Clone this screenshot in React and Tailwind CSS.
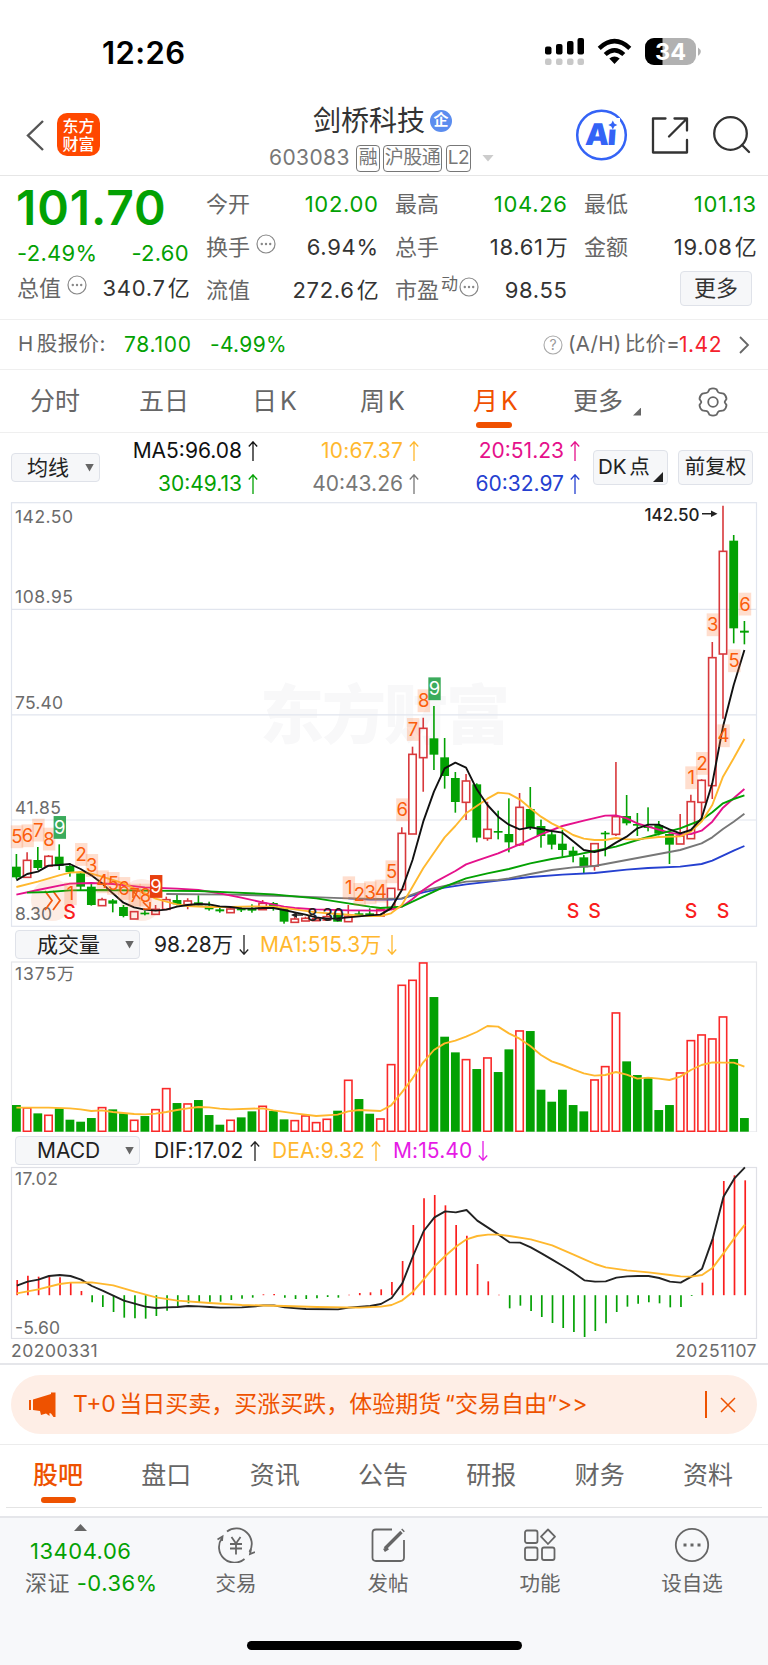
import { clsx } from 'clsx';

const RED = '#d8393c';
const GREEN = '#03a103';

const xAt = (i) => 16.4 + i * 10.706;

// [direction, high, body top, body bottom, low], in thirds of a pixel from the chart's top
const candles = [
  ['g', 1062, 1100, 1132, 1137], ['r', 1057, 1081, 1132, 1132], ['g', 1041, 1080, 1104, 1110],
  ['r', 1065, 1069, 1098, 1098], ['g', 1033, 1070, 1098, 1110], ['g', 1090, 1098, 1116, 1130],
  ['g', 1117, 1120, 1160, 1170], ['g', 1150, 1160, 1215, 1217], ['r', 1193, 1199, 1217, 1217],
  ['g', 1197, 1201, 1211, 1237], ['g', 1215, 1221, 1248, 1252], ['r', 1235, 1235, 1257, 1257],
  ['g', 1232, 1238, 1243, 1246], ['r', 1215, 1228, 1243, 1243], ['r', 1190, 1199, 1228, 1228],
  ['g', 1185, 1200, 1213, 1216], ['r', 1195, 1203, 1214, 1228], ['g', 1186, 1207, 1216, 1216],
  ['g', 1205, 1217, 1228, 1232], ['g', 1222, 1228, 1234, 1238], ['r', 1222, 1227, 1238, 1238],
  ['g', 1220, 1226, 1231, 1236], ['g', 1213, 1224, 1232, 1238], ['r', 1200, 1210, 1229, 1229],
  ['g', 1206, 1209, 1222, 1232], ['g', 1225, 1226, 1265, 1271], ['r', 1250, 1257, 1267, 1267],
  ['r', 1250, 1255, 1263, 1263], ['r', 1254, 1256, 1262, 1262], ['r', 1243, 1250, 1260, 1260],
  ['g', 1240, 1244, 1265, 1265], ['r', 1215, 1249, 1265, 1265], ['g', 1232, 1240, 1245, 1250],
  ['g', 1225, 1240, 1246, 1246], ['r', 1222, 1228, 1248, 1248], ['r', 1165, 1165, 1226, 1226],
  ['r', 982, 1000, 1169, 1169], ['r', 740, 763, 1002, 1002], ['r', 653, 685, 773, 875],
  ['g', 618, 715, 764, 810], ['g', 714, 772, 828, 866], ['g', 816, 834, 906, 938],
  ['r', 822, 843, 907, 960], ['g', 850, 853, 1013, 1027], ['r', 905, 988, 1015, 1022],
  ['g', 932, 993, 998, 1018], ['g', 895, 1002, 1027, 1057], ['r', 879, 922, 1034, 1038],
  ['g', 861, 927, 984, 990], ['g', 959, 978, 1008, 1043], ['g', 990, 1003, 1034, 1048],
  ['g', 990, 1031, 1050, 1070], ['g', 1040, 1052, 1065, 1087], ['g', 1065, 1072, 1102, 1119],
  ['r', 1031, 1031, 1098, 1112], ['g', 993, 998, 1003, 1069], ['r', 786, 950, 1003, 1008],
  ['g', 885, 948, 970, 976], ['g', 939, 972, 977, 1008], ['g', 922, 979, 984, 994],
  ['g', 963, 975, 1001, 1006], ['g', 1000, 1002, 1034, 1092], ['r', 942, 1008, 1032, 1032],
  ['r', 884, 905, 1016, 1016], ['r', 838, 841, 907, 960], ['r', 426, 473, 857, 897],
  ['r', 17, 154, 462, 656], ['g', 105, 122, 385, 430], ['g', 363, 392, 398, 433],
];

const averages = [
  {
    color: '#2540d0',
    points: [[31, 1195], [33, 1199], [35, 1199], [36, 1196], [38, 1177], [40, 1163], [42, 1153], [45, 1142], [48, 1131], [51, 1124], [54, 1119], [57, 1109], [59, 1104], [62, 1100], [64, 1092], [65, 1082], [66, 1067], [67, 1052], [68, 1038]],
  },
  {
    color: '#777777',
    points: [[14, 1182], [20, 1184], [25, 1188], [29, 1193], [31, 1195], [34, 1197], [36, 1195], [38, 1172], [40, 1158], [42, 1145], [45, 1140], [46, 1135], [48, 1122], [50, 1110], [52, 1102], [54, 1098], [57, 1080], [60, 1062], [62, 1050], [64, 1030], [65, 1012], [66, 987], [67, 965], [68, 941]],
  },
  {
    color: '#e5118b',
    points: [[0, 1184], [2, 1170], [4, 1157], [5, 1151], [7, 1149], [9, 1152], [12, 1162], [15, 1166], [17, 1170], [19, 1180], [21, 1193], [23, 1207], [25, 1220], [26, 1224], [28, 1228], [31, 1231], [34, 1232], [35, 1229], [36, 1220], [37, 1197], [38, 1170], [39, 1148], [41, 1113], [42, 1093], [43, 1082], [45, 1060], [47, 1033], [49, 1003], [51, 978], [53, 962], [55, 947], [56, 946], [57, 955], [58, 970], [59, 980], [61, 998], [62, 1003], [63, 1002], [64, 992], [65, 965], [66, 923], [67, 895], [68, 867]],
  },
  {
    color: GREEN,
    points: [[1, 1178], [3, 1176], [5, 1171], [8, 1170], [12, 1172], [17, 1173], [20, 1177], [24, 1183], [28, 1195], [31, 1210], [33, 1220], [34, 1224], [36, 1220], [38, 1190], [40, 1160], [42, 1135], [44, 1120], [46, 1107], [48, 1090], [50, 1077], [52, 1066], [54, 1053], [56, 1040], [58, 1020], [60, 1002], [62, 985], [64, 960], [65, 937], [66, 910], [67, 897], [68, 886]],
  },
  {
    color: '#ffb82e',
    points: [[0, 1161], [2, 1145], [4, 1126], [5, 1118], [6, 1116], [7, 1121], [8, 1130], [9, 1140], [10, 1150], [12, 1180], [13, 1196], [14, 1205], [15, 1213], [16, 1218], [18, 1221], [20, 1221], [22, 1219], [24, 1220], [26, 1228], [28, 1237], [30, 1242], [32, 1246], [33, 1248], [34, 1248], [35, 1240], [36, 1215], [37, 1160], [38, 1105], [39, 1058], [40, 1012], [41, 978], [42, 940], [43, 918], [44, 896], [45, 878], [46, 881], [47, 898], [48, 925], [49, 950], [50, 970], [51, 986], [52, 1005], [53, 1016], [54, 1020], [55, 1020], [56, 1014], [57, 1018], [58, 1018], [60, 1011], [62, 1009], [63, 995], [64, 965], [65, 915], [66, 830], [67, 775], [68, 717]],
  },
  {
    color: '#111111',
    points: [[0, 1141], [1, 1122], [2, 1115], [3, 1097], [4, 1095], [5, 1092], [6, 1107], [7, 1126], [8, 1150], [9, 1180], [10, 1208], [11, 1222], [12, 1229], [13, 1232], [14, 1229], [15, 1220], [16, 1215], [17, 1212], [18, 1213], [19, 1219], [20, 1221], [21, 1225], [22, 1226], [23, 1224], [24, 1224], [25, 1230], [26, 1237], [27, 1244], [28, 1252], [29, 1256], [30, 1255], [31, 1252], [32, 1249], [33, 1246], [34, 1244], [35, 1225], [36, 1170], [37, 1080], [38, 965], [39, 875], [40, 805], [41, 788], [42, 803], [43, 868], [44, 915], [45, 950], [46, 974], [47, 988], [48, 982], [49, 987], [50, 993], [51, 998], [52, 1024], [53, 1050], [54, 1056], [55, 1048], [56, 1028], [57, 1010], [58, 985], [59, 974], [60, 974], [61, 988], [62, 1000], [63, 990], [64, 955], [65, 850], [66, 680], [67, 555], [68, 450]],
  },
];

// [index, centre, digit, filled background]
const counts = [
  [0, 1010, '5'], [1, 1007, '6'], [2, 990, '7'], [3, 1017, '8'], [4, 982, '9', '#3bab5c'],
  [5, 1181, '1'], [6, 1063, '2'], [7, 1096, '3'], [8, 1145, '4'], [9, 1150, '5'], [10, 1165, '6'],
  [11, 1185, '7'], [12, 1185, '8'], [13, 1159, '9', '#e8400f'],
  [31, 1163, '1'], [32, 1183, '2'], [33, 1178, '3'], [34, 1173, '4'], [35, 1115, '5'],
  [36, 929, '6'], [37, 688, '7'], [38, 602, '8'], [39, 566, '9', '#3bab5c'],
  [63, 833, '1'], [64, 790, '2'], [65, 374, '3'], [66, 707, '4'], [67, 482, '5'], [68, 312, '6'],
];

const volumes = 'g526 r533 g551 r555 g536 g570 g576 g565 r532 g539 g551 r570 g559 r538 r475 g520 r521 g511 g556 g585 r570 g563 g545 r528 g544 g569 r571 r557 r577 r567 g543 r450 g508 g552 r566 r403 r165 r150 r98 g202 g321 g368 r388 g418 r383 g427 g359 r302 g304 g480 g516 g480 g526 g545 r449 r409 r248 g395 g436 g444 g541 g526 r428 r331 r314 r326 r260 g388 g565'
  .split(' ')
  .map((v) => [v[0], Number(v.slice(1))]);

const volumeAverage = [[0, 533], [3, 533], [5, 535], [6, 538], [7, 543], [8, 541], [9, 546], [11, 552], [12, 553], [13, 551], [14, 546], [15, 540], [16, 535], [17, 531], [18, 532], [19, 536], [20, 538], [23, 535], [24, 541], [26, 550], [28, 558], [30, 554], [31, 544], [32, 540], [34, 543], [35, 526], [36, 487], [37, 445], [38, 397], [39, 360], [40, 340], [41, 332], [42, 320], [43, 306], [44, 288], [45, 290], [46, 310], [47, 326], [48, 348], [49, 375], [50, 394], [51, 405], [52, 418], [53, 430], [54, 437], [55, 435], [56, 426], [57, 434], [58, 446], [59, 443], [60, 446], [61, 450], [62, 440], [63, 420], [64, 405], [65, 397], [66, 398], [67, 398], [68, 410]];

const macd = [450, 437, 440, 436, 442, 458, 483, 517, 531, 546, 563, 565, 566, 558, 542, 529, 520, 517, 515, 515, 510, 506, 503, 493, 492, 503, 507, 507, 505, 501, 503, 494, 489, 487, 478, 456, 393, 285, 205, 195, 226, 285, 317, 402, 454, 494, 535, 527, 543, 561, 579, 594, 606, 621, 603, 580, 546, 530, 521, 517, 520, 532, 531, 498, 458, 325, 153, 136, 151];

const dif = [[0, 467], [1, 455], [2, 449], [3, 438], [4, 435], [5, 438], [6, 449], [7, 468], [8, 482], [9, 497], [10, 512], [11, 521], [12, 530], [13, 534], [14, 532], [15, 531], [16, 528], [17, 529], [18, 531], [19, 533], [21, 532], [22, 530], [23, 526], [24, 526], [25, 532], [27, 537], [30, 538], [31, 533], [33, 528], [34, 522], [35, 504], [36, 460], [37, 378], [38, 303], [39, 262], [40, 244], [41, 247], [42, 240], [43, 272], [44, 293], [45, 314], [46, 337], [47, 338], [48, 352], [49, 370], [50, 389], [51, 408], [52, 428], [53, 451], [54, 455], [55, 454], [56, 443], [57, 439], [58, 438], [59, 438], [60, 444], [61, 455], [62, 458], [63, 440], [64, 416], [65, 325], [66, 200], [67, 146], [68, 112]];

const dea = [[0, 490], [2, 478], [4, 462], [5, 458], [7, 457], [9, 466], [11, 485], [13, 502], [15, 512], [18, 519], [21, 525], [25, 528], [28, 531], [32, 533], [34, 530], [35, 525], [36, 511], [37, 485], [38, 448], [39, 410], [40, 378], [41, 350], [42, 328], [43, 318], [44, 314], [45, 314], [46, 318], [48, 328], [50, 346], [52, 374], [53, 388], [54, 402], [55, 412], [57, 421], [59, 427], [61, 435], [62, 439], [63, 440], [64, 435], [65, 413], [66, 370], [67, 325], [68, 284]];

const toPoints = (list, dx = 0) => list.map(([i, y]) => `${xAt(i) + dx},${y / 3}`).join(' ');

const Line = ({ points, color, dx }) => (
  <polyline points={toPoints(points, dx)} fill="none" stroke={color} strokeWidth="1.9" strokeLinejoin="round" />
);

const AxisLabel = ({ y, children, length }) => (
  <text x="15" y={y} fontSize="17.5" fill="#6b6b6b" textLength={length}>{children}</text>
);

const PriceChart = () => (
  <svg className="block" width="768" height="426" viewBox="0 2 768 426">
    <text x="260" y="238" fontSize="64" fontWeight="900" fill="#f8f8f9" textLength="250">东方财富</text>
    <g stroke="#e1e5ee" strokeWidth="1.2" fill="none">
      <path d="M11.5 109.3H756.5M11.5 214.8H756.5M11.5 320H756.5" />
      <rect x="11.5" y="2.7" width="745" height="423.6" />
    </g>
    <AxisLabel y="22.5" length="58">142.50</AxisLabel>
    <AxisLabel y="103" length="58">108.95</AxisLabel>
    <AxisLabel y="209" length="48">75.40</AxisLabel>
    <AxisLabel y="314" length="46">41.85</AxisLabel>
    <circle cx="52" cy="400" r="21" fill="#fdece4" />
    <circle cx="141.5" cy="400" r="21" fill="#fdece4" />
    <AxisLabel y="420" length="37">8.30</AxisLabel>
    <path d="M45 391L52 400.5L45 410M53 391L60 400.5L53 410" fill="none" stroke="#f45a10" strokeWidth="1.8" />
    {candles.map(([dir, high, top, bottom, low], i) => {
      const x = xAt(i);
      if (dir === 'g') {
        return (
          <g key={i} fill={GREEN}>
            <rect x={x - 0.8} y={high / 3} width="1.6" height={(low - high) / 3} />
            <rect x={x - 4.4} y={top / 3} width="8.8" height={(bottom - top) / 3} />
          </g>
        );
      }
      return (
        <g key={i} stroke={RED} strokeWidth="1.6" fill="none">
          <path d={`M${x} ${high / 3}V${top / 3}M${x} ${bottom / 3}V${low / 3}`} />
          <rect x={x - 3.7} y={top / 3} width="7.4" height={(bottom - top) / 3} />
        </g>
      );
    })}
    {averages.map((line) => <Line key={line.color} {...line} />)}
    {counts.map(([i, y, digit, fill]) => (
      <g key={i}>
        <rect x={xAt(i) - 5.6} y={y / 3 - 11.3} width="12.4" height="22.8" fill={fill || '#ff7a3c'} opacity={fill ? 1 : 0.25} />
        <text x={xAt(i) + 0.5} y={y / 3 + 6.6} fontSize="18.5" textAnchor="middle" fill={fill ? '#fff' : '#fb5d0b'}>{digit}</text>
      </g>
    ))}
    <path d="M140 399L133 391M133 398V391H140M143 402L150 409M150 402V409H143" fill="none" stroke="#f45a10" strokeWidth="1.6" />
    {[[69.5, 418.5], [573, 418], [594.6, 418], [691, 418], [723, 418]].map(([x, y]) => (
      <text key={x} x={x} y={y} fontSize="19.5" fontWeight="500" textAnchor="middle" fill="#fa1e1e">S</text>
    ))}
    <g fill="#222" fontSize="17" fontWeight="500">
      <text x="644.5" y="20.5" textLength="55">142.50</text>
      <text x="307" y="421" textLength="37">8.30</text>
    </g>
    <path d="M702 13.7H712M303 415H293" stroke="#222" strokeWidth="1.4" />
    <path d="M711 10.5L717.5 13.7L711 17ZM297 412L291 415L297 418Z" fill="#222" />
  </svg>
);

const VolumeChart = () => (
  <svg className="block" width="768" height="171" viewBox="0 31 768 171">
    <rect x="11.5" y="32" width="745" height="170" fill="none" stroke="#e5e6ea" strokeWidth="1.2" />
    <AxisLabel y="50" length="59.5">1375万</AxisLabel>
    {volumes.map(([dir, top], i) =>
      dir === 'g' ? (
        <rect key={i} x={xAt(i) - 4.4} y={top / 3 - 0.3} width="8.8" height={202 - top / 3} fill={GREEN} />
      ) : (
        <rect key={i} x={xAt(i) - 3.7} y={top / 3 + 0.3} width="7.4" height={201 - top / 3} fill="none" stroke="#fa2a2a" strokeWidth="1.6" />
      )
    )}
    <Line points={volumeAverage} color="#ffb82e" />
  </svg>
);

const MacdChart = () => (
  <svg className="block" width="768" height="173" viewBox="0 36 768 173">
    <rect x="11.5" y="37.5" width="745" height="171" fill="none" stroke="#dfe0e6" strokeWidth="1.2" />
    <AxisLabel y="55" length="43">17.02</AxisLabel>
    <AxisLabel y="203.5" length="45">-5.60</AxisLabel>
    {macd.map((y, i) => (
      <path key={i} d={`M${xAt(i) + 0.8} 165.2V${y / 3}`} stroke={y < 495 ? '#fa1e1e' : GREEN} strokeWidth="1.7" />
    ))}
    <Line points={dif} color="#222" dx={0.5} />
    <Line points={dea} color="#ffb82e" dx={0.5} />
  </svg>
);

const Arrow = ({ down }) => (
  <svg width="10" height="20" viewBox="0 0 10 20" className={clsx('shrink-0', down && 'rotate-180')}>
    <path d="M5 20V1M0.8 5.5L5 0.8L9.2 5.5" fill="none" stroke="currentColor" strokeWidth="1.3" />
  </svg>
);

const Caret = () => <span className="h-2 w-2.25 bg-[#666] [clip-path:polygon(0_0,100%_0,50%_100%)]" />;

const Info = () => (
  <svg width="20" height="20" viewBox="0 0 20 20">
    <circle cx="10" cy="10" r="9" fill="none" stroke="#888" strokeWidth="1.2" />
    <g fill="#888">
      <circle cx="5.8" cy="10" r="1.2" />
      <circle cx="10" cy="10" r="1.2" />
      <circle cx="14.2" cy="10" r="1.2" />
    </g>
  </svg>
);

const Tag = ({ children, className }) => (
  <span className={clsx('flex h-[27px] items-center justify-center rounded-[4px] border border-[#777] text-[19px] tracking-[-0.5px]', className)}>{children}</span>
);

const StatusBar = () => (
  <div className="flex h-[100px] items-start pt-[33px]">
    <div className="w-[545px] pl-[102px] text-[31px] leading-[40px] font-semibold tracking-[0.4px] text-black">12:26</div>
    <svg width="160" height="40" viewBox="545 33 160 40">
      <g fill="#000">
        <rect x="545" y="46.5" width="6.5" height="8" rx="2" />
        <rect x="556" y="44" width="6.5" height="10.5" rx="2" />
        <rect x="567" y="41" width="6.5" height="13.5" rx="2" />
        <rect x="577.5" y="38" width="6.5" height="16.5" rx="2" />
      </g>
      <g fill="#c8c8c8">
        <rect x="545" y="58.5" width="6.5" height="6.5" rx="2" />
        <rect x="556" y="58.5" width="6.5" height="6.5" rx="2" />
        <rect x="567" y="58.5" width="6.5" height="6.5" rx="2" />
        <rect x="577.5" y="58.5" width="6.5" height="6.5" rx="2" />
      </g>
      <g fill="none" stroke="#000" strokeWidth="4.4">
        <path d="M599.2 48.3Q614.5 34 629.8 48.3" />
        <path d="M605.2 54.5Q614.5 46 623.8 54.5" />
      </g>
      <path d="M609.3 58.5Q614.5 54.5 619.7 58.5L614.5 64Z" />
      <rect x="645" y="38" width="51" height="27" rx="9" fill="#b1b1b1" />
      <path d="M654 38H662.5V65H654A9 9 0 0 1 645 56V47A9 9 0 0 1 654 38Z" />
      <path d="M698 47.5Q703.500 51.5 698 56Z" fill="#b1b1b1" />
      <text x="670.5" y="60" fontSize="23.5" fontWeight="700" textAnchor="middle" fill="#fff">34</text>
    </svg>
  </div>
);

const Header = () => (
  <div className="flex h-[76px] border-b border-[#e6e6e6]">
    <div className="flex w-[262px] gap-3 pt-[13px] pl-[26px]">
      <svg width="19" height="43" viewBox="0 0 19 43">
        <path d="M17 8L2 22.5L17 37" fill="none" stroke="#555" strokeWidth="2.4" />
      </svg>
      <div className="flex h-[43px] w-[43px] flex-col items-center justify-center rounded-[10px] bg-[#ff4800] text-[16px] leading-[18px] font-medium text-white">
        <span>东方</span>
        <span>财富</span>
      </div>
    </div>
    <div className="w-[262px] pt-1">
      <div className="flex h-8 items-center pt-px pl-[51px] text-[28px] text-[#333]">
        剑桥科技
        <span className="ml-[5px] flex h-[22px] w-[22px] items-center justify-center rounded-full bg-[#5b8def] text-[15px] font-bold text-white">企</span>
      </div>
      <div className="mt-2 flex h-7 items-center pl-[7px] text-[21px] text-[#777]">
        <span className="w-[87px] tracking-[0.4px]">603083</span>
        <Tag className="w-[24px]">融</Tag>
        <Tag className="ml-[3px] w-[59px]">沪股通</Tag>
        <Tag className="ml-[4px] w-[25px]">L2</Tag>
        <span className="ml-[11px] h-[7px] w-3 bg-[#ccc] [clip-path:polygon(0_0,100%_0,50%_100%)]" />
      </div>
    </div>
    <svg width="244" height="75" viewBox="524 100 244 75">
      <circle cx="601.5" cy="135" r="24.3" fill="none" stroke="#3463f6" strokeWidth="2.5" />
      <text x="585" y="145" fontSize="30" fontWeight="900" fill="#3463f6" transform="skewX(-4) translate(10 0)" textLength="31">Ai</text>
      <rect x="607" y="118" width="13" height="11.5" fill="#fff" />
      <path d="M612.8 120.5L614.3 123.500L617.3 125L614.3 126.500L612.8 129.500L611.3 126.500L608.3 125L611.3 123.500Z" fill="#3463f6" />
      <g fill="none" stroke="#333" strokeWidth="2.3" strokeLinecap="round" strokeLinejoin="round">
        <path d="M665.5 118.5H653V152.500H687V140M674.5 118.5H687V130.500M687 118.5L669 136.500" />
        <circle cx="730.5" cy="133.5" r="16.3" />
        <path d="M742 145L749 152" />
      </g>
    </svg>
  </div>
);

const Stat = ({ label, value, unit, green, extra }) => (
  <div className="flex h-[43px] items-center justify-between text-[22px] text-[#666]">
    <span className="flex items-center">
      {label}
      {extra}
    </span>
    <span className={clsx('-mr-[0.7px] tracking-[0.7px]', green ? 'text-[#03a103]' : 'text-[#333]')}>
      {value}
      {unit && <span className="ml-[2px] tracking-normal">{unit}</span>}
    </span>
  </div>
);

const Quote = () => (
  <div className="flex h-[144px] gap-[17px] border-b border-[#efefef] pt-[7px] pl-[17px]">
    <div className="w-[172px]">
      <div className="-ml-px h-[49px] text-[48px] leading-[49px] font-semibold tracking-[0.9px] text-[#03a103]">101.70</div>
      <div className="mt-[7px] flex h-[28px] items-center justify-between text-[22px] tracking-[0.3px] text-[#03a103]">
        <span>-2.49%</span>
        <span>-2.60</span>
      </div>
      <Stat label="总值" value="340.7" unit="亿" extra={<span className="mb-2 ml-1.5"><Info /></span>} />
    </div>
    <div className="w-[172px]">
      <Stat label="今开" value="102.00" green />
      <Stat label="换手" value="6.94%" extra={<span className="mb-2 ml-1.5"><Info /></span>} />
      <Stat label="流值" value="272.6" unit="亿" />
    </div>
    <div className="w-[172px]">
      <Stat label="最高" value="104.26" green />
      <Stat label="总手" value="18.61" unit="万" />
      <Stat
        label="市盈"
        value="98.55"
        extra={
          <>
            <span className="mb-3 ml-0.5 text-[17px]">动</span>
            <span className="mb-2 ml-px"><Info /></span>
          </>
        }
      />
    </div>
    <div className="w-[172px]">
      <Stat label="最低" value="101.13" green />
      <Stat label="金额" value="19.08" unit="亿" />
      <div className="mt-[2px] mr-1 ml-auto flex h-[35px] w-[72px] items-center justify-center rounded-[4px] border border-[#dfe2e9] bg-[#f6f7f9] text-[22px] text-[#333]">更多</div>
    </div>
  </div>
);

const HShare = () => (
  <div className="flex h-[50px] items-center border-b border-[#efefef] pl-[18px] text-[20.5px] text-[#666] [word-spacing:-3px]">
    <span className="w-[106px] tracking-[0.4px]">H 股报价:</span>
    <span className="w-[86px] text-[21px] tracking-[0.7px] text-[#03a103]">78.100</span>
    <span className="w-[333px] text-[21px] tracking-[0.3px] text-[#03a103]">-4.99%</span>
    <svg width="20" height="20" viewBox="0 0 20 20">
      <circle cx="10" cy="10" r="9" fill="none" stroke="#aaa" strokeWidth="1.1" />
      <text x="10" y="15" fontSize="14" textAnchor="middle" fill="#999">?</text>
    </svg>
    <span className="ml-[5px] w-[111px] tracking-[0.3px] whitespace-nowrap">(A/H) 比价=</span>
    <span className="w-[59px] text-[21px] tracking-[0.5px] text-[#f5222d]">1.42</span>
    <svg width="12" height="18" viewBox="0 0 12 18">
      <path d="M2 1L10 9L2 17" fill="none" stroke="#666" strokeWidth="1.8" />
    </svg>
  </div>
);

const periods = [
  { label: '分时', pad: 'w-[109px]' },
  { label: '五日', pad: 'w-[113px]' },
  { label: '日 K', pad: 'w-[108px]' },
  { label: '周 K', pad: 'w-[113px]' },
  { label: '月 K', pad: 'w-[100px]', active: true },
  { label: '更多', pad: 'w-[60px]' },
];

const Periods = () => (
  <div className="flex h-[63px] items-center border-b border-[#efefef] pt-px pl-[30px] text-[25px] text-[#666] [word-spacing:-4px]">
    {periods.map(({ label, pad, active }) => (
      <div key={label} className={clsx('relative', pad, active && 'text-[#f05000]')}>
        {label}
        {active && <span className="absolute top-[39px] left-[3px] h-[6px] w-[36px] rounded-full bg-[#f05000]" />}
      </div>
    ))}
    <span className="mt-5 h-[8px] w-[8px] bg-[#666] [clip-path:polygon(100%_0,100%_100%,0_100%)]" />
    <svg className="ml-[57px]" width="30" height="30" viewBox="-15 -15 30 30" fill="none" stroke="#666" strokeWidth="1.8">
      <path d="M-3.5 -12.8Q0 -14.5 3.5 -12.8L5 -10Q6 -8.8 8 -8.9L10.5 -8.5Q13.3 -6.5 13.5 -3L12 -0.8Q11.5 0 12 0.8L13.5 3Q13.3 6.5 10.5 8.5L8 8.9Q6 8.8 5 10L3.5 12.8Q0 14.5 -3.5 12.8L-5 10Q-6 8.8 -8 8.9L-10.5 8.5Q-13.3 6.5 -13.5 3L-12 0.8Q-11.5 0 -12 -0.8L-13.5 -3Q-13.3 -6.5 -10.5 -8.5L-8 -8.9Q-6 -8.8 -5 -10Z" />
      <circle r="4.8" />
    </svg>
  </div>
);

const legend = [
  { text: 'MA5:96.08', color: 'text-[#111]' },
  { text: '10:67.37', color: 'text-[#ffb82e] tracking-[0.2px]' },
  { text: '20:51.23', color: 'text-[#e5118b]' },
  { text: '30:49.13', color: 'text-[#03a103]' },
  { text: '40:43.26', color: 'text-[#777]' },
  { text: '60:32.97', color: 'text-[#2540d0]' },
];

const box = 'flex items-center rounded-[4px] border border-[#dfe2e9] bg-[#f6f7f9] text-[#222]';

const Legend = () => (
  <div className="flex h-[69px] pl-[11px]">
    <div className={clsx(box, 'mt-[20px] h-[29px] w-[89px] justify-between pr-[5px] pl-[15px] text-[21px]')}>
      均线
      <Caret />
    </div>
    <div className="grid w-[480px] grid-cols-[158px_161px_161px] grid-rows-[33px_33px] pt-px text-[21px]">
      {legend.map(({ text, color }) => (
        <div key={text} className={clsx('flex items-center justify-end gap-[6px]', color)}>
          {text}
          <Arrow />
        </div>
      ))}
    </div>
    <div className={clsx(box, 'relative mt-[17px] ml-[13px] h-[35px] w-[75px] pl-[4px] text-[20.5px] [word-spacing:-3px]')}>
      DK 点
      <span className="absolute right-[4px] bottom-[2px] h-[10px] w-[10px] bg-[#222] [clip-path:polygon(100%_0,100%_100%,0_100%)]" />
    </div>
    <div className={clsx(box, 'mt-[17px] ml-[10px] h-[35px] w-[75px] justify-center text-[20.5px]')}>前复权</div>
  </div>
);

const Indicator = ({ name, className, children }) => (
  <div className={clsx('flex pl-[15px] text-[21px]', className)}>
    <div className={clsx(box, 'h-[29px] w-[125px] justify-between pr-[5px] pl-[21px]')}>
      {name}
      <Caret />
    </div>
    <div className="flex h-[29px] items-center pl-[14px]">{children}</div>
  </div>
);

const Reading = ({ className, down, children }) => (
  <span className={clsx('flex items-center gap-[6px] tracking-[0.1px] whitespace-nowrap', className)}>
    {children}
    <Arrow down={down} />
  </span>
);

const Banner = () => (
  <div className="mx-[11px] mt-[10px] flex h-[59px] items-center rounded-full bg-[#feeee6] text-[#ee5200]">
    <svg className="ml-[18px]" width="27" height="26" viewBox="0 0 27 26" fill="currentColor">
      <path d="M0 8H2V18H0ZM4 7.5L22 2V0.5H26.5V25H24.5L22 21.5L20.5 21V24L17 21.5L12 23L11 19L4 18Z" />
    </svg>
    <span className="ml-[17px] w-[632px] text-[23px] whitespace-nowrap [word-spacing:-3px]">T+0 当日买卖，买涨买跌，体验期货 “交易自由”&gt;&gt;</span>
    <span className="h-[27px] w-[1.5px] bg-[#ee5200]" />
    <svg className="ml-[13px]" width="16" height="16" viewBox="0 0 16 16">
      <path d="M1 1L15 15M15 1L1 15" stroke="currentColor" strokeWidth="1.5" />
    </svg>
  </div>
);

const sections = ['股吧', '盘口', '资讯', '公告', '研报', '财务', '资料'];

const Sections = () => (
  <div className="mt-[10px] h-[64px] border-t border-[#ececec] px-[6px]">
    <div className="flex h-[63px] items-center justify-between border-b border-[#e4e4e4] pr-[29px] pl-[27px] text-[25px] text-[#666]">
      {sections.map((name, i) => (
        <span key={name} className={clsx('relative', i === 0 && 'font-medium text-[#ee5200]')}>
          {name}
          {i === 0 && <span className="absolute top-[40px] left-[8px] h-[6px] w-[35px] rounded-full bg-[#ee5200]" />}
        </span>
      ))}
    </div>
  </div>
);

const TradeIcon = () => (
  <g>
    <path d="M10 4.5A15.5 15.5 0 0 1 32.5 25M27.5 32A15.5 15.5 0 0 1 5 11" />
    <path d="M0.5 12.5L5.5 9.5L5 14M38 25L33 27L34 22" />
    <path d="M14.5 10L19 16.5L23.5 10M19 16.5V27.5M13 17H25M13 21.5H25" />
  </g>
);

const PostIcon = () => (
  <g>
    <path d="M23 2.5H7Q3.5 2.5 3.5 6V30.5Q3.5 34 7 34H31.5Q35 34 35 30.5V13" />
    <path d="M16 21.5L32.5 5M15 23.5L19 21" strokeWidth="3.4" />
    <path d="M33.5 3.8L34.5 2.8" strokeWidth="3.8" />
  </g>
);

const GridIcon = () => (
  <g>
    <rect x="4" y="3.5" width="12.5" height="12.5" rx="2" />
    <rect x="4" y="20.5" width="12.5" height="12.5" rx="2" />
    <rect x="21" y="20.5" width="12.5" height="12.5" rx="2" />
    <path d="M27 2.5L34 9.7L27 17L20 9.7Z" strokeLinejoin="round" />
  </g>
);

const MoreIcon = () => (
  <g>
    <circle cx="19" cy="18" r="16.2" />
    <path d="M10.5 18H13.5M17.5 18H20.5M24.5 18H27.5" strokeWidth="3" />
  </g>
);

const actions = [
  { label: '交易', Icon: TradeIcon },
  { label: '发帖', Icon: PostIcon },
  { label: '功能', Icon: GridIcon },
  { label: '设自选', Icon: MoreIcon },
];

const BottomBar = () => (
  <div className="mt-[8px] flex h-[149px] flex-col items-center border-t-2 border-[#e5e6ea] bg-[#f7f8fa]">
    <div className="flex h-[123px] w-full">
      <div className="w-[160px] text-[22px] tracking-[0.5px]">
        <div className="mt-[6px] ml-[74px] h-[7px] w-[13px] bg-[#666] [clip-path:polygon(50%_0,100%_100%,0_100%)]" />
        <div className="mt-[4px] pl-[30px] text-[#03a103]">13404.06</div>
        <div className="-mt-px pl-[25px] whitespace-nowrap text-[#666]">
          深证 <span className="text-[#03a103]">-0.36%</span>
        </div>
      </div>
      {actions.map(({ label, Icon }) => (
        <div key={label} className="flex w-[152px] flex-col items-center pt-[9px] text-[20.5px] text-[#666]">
          <svg width="38" height="36" viewBox="0 0 38 36" fill="none" stroke="#666" strokeWidth="1.8">
            <Icon />
          </svg>
          <div className="mt-[6px]">{label}</div>
        </div>
      ))}
    </div>
    <div className="h-[9px] w-[275px] rounded-full bg-black" />
  </div>
);

export default function App() {
  return (
    <div className="h-[1665px] w-[768px] overflow-hidden bg-white font-['Inter','Noto_Sans_CJK_SC',sans-serif]">
      <StatusBar />
      <Header />
      <Quote />
      <HShare />
      <Periods />
      <Legend />
      <PriceChart />
      <Indicator name="成交量" className="h-[33px] pt-[2px]">
        <Reading down className="w-[106px] text-[#222]">98.28万</Reading>
        <Reading down className="text-[#ffb82e]">MA1:515.3万</Reading>
      </Indicator>
      <VolumeChart />
      <Indicator name="MACD" className="h-[34px] pt-[4px]">
        <Reading className="w-[118px] text-[#222]">DIF:17.02</Reading>
        <Reading className="w-[121px] text-[#ffb82e]">DEA:9.32</Reading>
        <Reading down className="text-[#e51be5]">M:15.40</Reading>
      </Indicator>
      <MacdChart />
      <div className="flex h-[26px] items-center justify-between border-b-2 border-[#e5e6ea] px-[11px] text-[17.5px] tracking-[0.5px] text-[#6b6b6b]">
        <span>20200331</span>
        <span>20251107</span>
      </div>
      <Banner />
      <Sections />
      <BottomBar />
    </div>
  );
}
